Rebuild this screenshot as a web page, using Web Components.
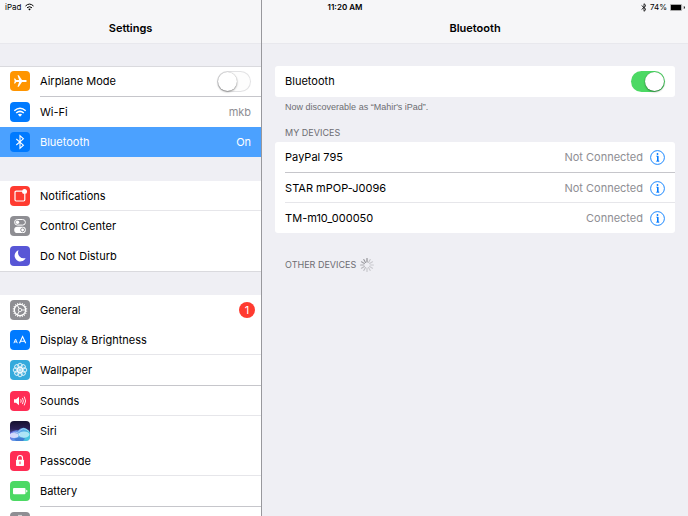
<!DOCTYPE html>
<html lang="en">
<head>
<meta charset="utf-8">
<title>Settings</title>
<style>
  html, body { height: 100%; margin: 0; }
  body {
    font: 11px/14px Inter, "Liberation Sans", sans-serif;
    color: #000; background: #efeff4;
    --sep-strong: #c6c6cb; --sep-soft: #e6e6ea; --muted: #8e8e93; --caption: #6d6d72; --blue: #007aff;
  }
</style>
</head>
<body>
<settings-app>
  <status-bar slot="status"></status-bar>
  <settings-pane slot="side" heading="Settings">
    <row-group edge="top">
      <settings-row icon="airplane" label="Airplane Mode" toggle="off" sep="strong"></settings-row>
      <settings-row icon="wifi" label="Wi-Fi" value="mkb"></settings-row>
      <settings-row icon="bluetooth" label="Bluetooth" value="On" selected></settings-row>
    </row-group>
    <row-group edge="bottom">
      <settings-row icon="notifications" label="Notifications" sep="soft"></settings-row>
      <settings-row icon="control" label="Control Center"></settings-row>
      <settings-row icon="moon" label="Do Not Disturb"></settings-row>
    </row-group>
    <row-group>
      <settings-row icon="gear" label="General" badge="1"></settings-row>
      <settings-row icon="display" label="Display &amp; Brightness" sep="soft"></settings-row>
      <settings-row icon="wallpaper" label="Wallpaper" sep="strong"></settings-row>
      <settings-row icon="sounds" label="Sounds" sep="soft"></settings-row>
      <settings-row icon="siri" label="Siri"></settings-row>
      <settings-row icon="passcode" label="Passcode" sep="soft"></settings-row>
      <settings-row icon="battery" label="Battery" sep="strong"></settings-row>
      <settings-row icon="privacy" aria-label="Privacy"></settings-row>
    </row-group>
  </settings-pane>
  <settings-pane slot="main" heading="Bluetooth">
    <card-group>
      <settings-row label="Bluetooth" toggle="on"></settings-row>
      <span slot="footer">Now discoverable as “Mahir's iPad”.</span>
    </card-group>
    <card-group heading="MY DEVICES">
      <device-row name="PayPal 795" status="Not Connected" sep="strong"></device-row>
      <device-row name="STAR mPOP-J0096" status="Not Connected" sep="soft"></device-row>
      <device-row name="TM-m10_000050" status="Connected"></device-row>
    </card-group>
    <search-heading>OTHER DEVICES</search-heading>
  </settings-pane>
</settings-app>

<script>
const BT = 'M6.3 7 13.4 13.2 10 16.3V3.7L13.4 6.8 6.3 13';
const ring = (n, draw) => Array.from({ length: n }, (_, i) => draw(i * 360 / n, i)).join('');
const ICONS = {
  airplane: ['#ff9500', '<path fill="#fff" d="M16.8 10c0 .6-.8 1-1.8 1h-3l-3.2 4.7H7.5L9.1 11H6.3l-1.2 1.6H4L4.7 10 4 7.4h1.1L6.3 9h2.8L7.5 4.3h1.3L12 9h3c1 0 1.8.4 1.8 1z"/>'],
  wifi: ['#007aff', '<g fill="none" stroke="#fff" stroke-width="1.5"><path d="M4.300 8.700Q10 3.700 15.700 8.700M6.200 11Q10 7.800 13.800 11"/></g><path fill="#fff" d="M7.900 12.600Q10 10.900 12.100 12.600L10 14.800z"/>'],
  bluetooth: ['#007aff', `<path fill="none" stroke="#fff" stroke-width="1.1" d="${BT}"/>`],
  notifications: ['#ff3b30', '<path fill="none" stroke="#fff" stroke-width="1.2" d="M12 5.200H6.200Q5 5.200 5 6.400v7.400Q5 15 6.200 15h7.400q1.200 0 1.200-1.200V8"/><circle cx="14.500" cy="5.400" r="2.500" fill="#fff"/>'],
  control: ['#8e8e93', '<rect x="4.600" y="3.500" width="10.800" height="5.600" rx="2.800" fill="none" stroke="#fff"/><circle cx="7.500" cy="6.300" r="1.700" fill="#fff"/><rect x="4.200" y="10.800" width="11.600" height="6.200" rx="3.100" fill="#fff"/><circle cx="12.600" cy="13.900" r="1.900" fill="#fff" stroke="#8e8e93"/>'],
  moon: ['#5856d6', '<path fill="#fff" d="M8.600 4.300a5.700 5.700 0 1 0 7 7.600A5.600 5.600 0 0 1 8.600 4.300z"/>'],
  gear: ['#8e8e93', '<g fill="none" stroke="#fff"><circle cx="10" cy="10" r="5.600" stroke-width="1.2"/>' + ring(18, a => `<path d="M10 4.500V2.700" transform="rotate(${a} 10 10)"/>`) + '<circle cx="10" cy="10" r="1.700" stroke-width=".8"/>' + ring(3, a => `<path stroke-width=".9" d="M11.700 10H15.500" transform="rotate(${a} 10 10)"/>`) + '</g>'],
  display: ['#007aff', '<g fill="none" stroke="#fff"><path stroke-width=".9" d="M3.900 13.200 5.600 9.100l1.700 4.100M4.500 11.900h2.200"/><path stroke-width="1.1" d="M9.500 13.300 12.600 6.600l3.100 6.700M10.500 11.200h4.200"/></g>'],
  wallpaper: ['#34aadc', '<g fill="#fff" fill-opacity=".1" stroke="#fff" stroke-width=".8">' + ring(8, a => `<ellipse cx="10" cy="5.700" rx="2.200" ry="2.500" transform="rotate(${a} 10 10)"/>`) + '<circle cx="10" cy="10" r="3"/></g><circle cx="10" cy="10" r="1" fill="#fff"/>'],
  sounds: ['#ff2d55', '<path fill="#fff" d="M4 8.200h2L9 5.700v8.600l-3-2.500H4z"/><g fill="none" stroke="#fff" stroke-width=".9"><path d="M10.700 8.300q1 1.700 0 3.400M12.400 6.900q1.900 3.100 0 6.200M14.200 5.600q2.800 4.400 0 8.800"/></g>'],
  siri: ['linear-gradient(#15112f,#2a2056 40%,#6a7fd6 75%,#eef4ff)', '<defs><linearGradient id="g" x2="1" y2=".3"><stop stop-color="#6b55dc"/><stop offset=".5" stop-color="#5fa0ea"/><stop offset="1" stop-color="#48c4de"/></linearGradient></defs><path fill="url(#g)" d="M0 12Q4 8.500 8 9.500 12 5.500 16 7.500q3 1.500 4 4v9H0z"/><ellipse cx="4" cy="14.600" rx="4.600" ry="2.500" fill="#e6e8ff" fill-opacity=".85"/><ellipse cx="14" cy="13.600" rx="5.400" ry="3.200" fill="#c4f0fa" fill-opacity=".8"/><path fill="none" stroke="#e7fbff" stroke-opacity=".7" stroke-width=".7" d="M8 11.500q5-7 11-1M1 13q5-4 9 1"/><path fill="#3f74d0" fill-opacity=".85" d="M4 18q5-2.500 11-.5l-2 2.500H6z"/>'],
  passcode: ['#ff2d55', '<path fill="none" stroke="#fff" stroke-width="1.2" d="M7.500 9V7a2.500 2.500 0 0 1 5 0v2"/><rect x="6" y="8.700" width="8" height="6.300" rx=".8" fill="#fff"/><path stroke="#ff2d55" d="M10 10.500v2.700"/>'],
  battery: ['#4cd964', '<rect x="3" y="7" width="12.500" height="6.200" rx="1" fill="#fff"/><path fill="#fff" d="M16.200 8.800q1.300.2 1.300 1.300t-1.300 1.300z"/>'],
  privacy: ['#8e8e93', '<g stroke="#fff" stroke-width="1.3" stroke-linecap="round"><path d="M7 11V5M9 10V3.500M11 10V3.500M13 11V5"/></g><path fill="#fff" d="M6.300 9.500h7.400v4q-1 3-3.700 3t-5-5q1-.8 1.300.5z"/>']
};

function define(name, render) {
  customElements.define(name, class extends HTMLElement {
    constructor() { super(); this.attachShadow({ mode: 'open' }); }
    connectedCallback() { this.shadowRoot.innerHTML = render(this); }
  });
}
const esc = s => (s || '').replace(/&/g, '&amp;');

define('settings-app', () => `
<style>
  :host { display: grid; grid-template: 100vh / 8fr 13fr; overflow: hidden; }
  slot[name=status] { display: block; grid-area: 1 / 1 / 2 / 3; align-self: start; z-index: 1; }
  slot[name=side], slot[name=main] { display: block; min-width: 0; min-height: 0; box-sizing: border-box; }
  slot[name=side] { grid-area: 1 / 1; border-right: 1px solid #98989d; }
  slot[name=main] { grid-area: 1 / 2; }
</style>
<slot name="side"></slot><slot name="main"></slot><slot name="status"></slot>`);

define('status-bar', () => `
<style>
  :host { display: grid; grid-template-columns: 1fr auto 1fr; align-items: center; height: 14px; padding: 0 3px 0 5px; font-size: 8px; line-height: 14px; }
  .l, .r { display: flex; align-items: center; gap: 4px; }
  .r { justify-content: flex-end; gap: 3px; }
  b { font-weight: 600; }
  svg { display: block; }
</style>
<span class="l">iPad
  <svg width="9" height="8" viewBox="0 0 9 8"><g fill="none" stroke="#000" stroke-width="1"><path d="M.5 3Q4.500-.8 8.500 3M2 4.800Q4.500 2.600 7 4.800"/></g><path d="M3.200 6Q4.500 5 5.800 6L4.500 7.500z"/></svg>
</span>
<b>11:20 AM</b>
<span class="r">
  <svg width="6" height="9" viewBox="0 0 6 9"><path fill="none" stroke="#000" stroke-width=".8" d="M.6 2.500 5 6.400 3 8.300V.7L5 2.600.6 6.500"/></svg>
  74%
  <svg width="15" height="7" viewBox="0 0 15 7"><rect x=".3" y=".4" width="11.400" height="6.200" rx="1" fill="none" stroke="#000" stroke-opacity=".6" stroke-width=".6"/><rect x="1" y="1" width="10" height="5" fill="#000"/><path d="M13.800 2q1 .3 1 1.500t-1 1.500z" fill="#000"/></svg>
</span>`);

define('settings-pane', el => `
<style>
  :host { display: flex; flex-direction: column; height: 100%; background: #efeff4; }
  header { flex: none; padding: 21px 0 8px; background: #f6f6f8; border-bottom: 1px solid #e8e8ed; text-align: center; }
  h1 { margin: 0; font-size: 11px; line-height: 14px; font-weight: 600; }
  main { flex: 1; min-height: 0; overflow: auto; scrollbar-width: none; padding-top: 22px; }
</style>
<header><h1>${el.getAttribute('heading')}</h1></header><main><slot></slot></main>`);

define('row-group', el => `
<style>
  :host { display: block; margin-bottom: 24px; background: #fff; }
  :host([edge=top]) { box-shadow: inset 0 1px #dadade; }
  :host([edge=bottom]) { box-shadow: 0 1px #dadade; }
</style><slot></slot>`);

define('settings-row', el => {
  const icon = ICONS[el.getAttribute('icon')];
  const toggle = el.getAttribute('toggle');
  const tag = toggle ? 'label' : 'a';
  const end = toggle ? `<input type="checkbox" role="switch" ${toggle === 'on' ? 'checked' : ''}>`
    : el.hasAttribute('badge') ? `<span class="badge">${el.getAttribute('badge')}</span>`
    : el.hasAttribute('value') ? `<span class="value">${el.getAttribute('value')}</span>` : '';
  return `
<style>
  :host { display: block; }
  .row { display: flex; align-items: flex-start; padding-left: 10px; gap: 10px; color: inherit; text-decoration: none; }
  .icon { flex: none; width: 20px; height: 20px; margin: 5px 0; border-radius: 4px; overflow: hidden; background: ${icon ? icon[0] : 'none'}; }
  .icon svg { display: block; }
  .body { flex: 1; min-width: 0; display: flex; align-items: center; justify-content: space-between; height: 30px; padding-right: 10px; }
  :host([toggle]) .body { border-bottom: 1px solid transparent; }
  :host([sep=strong]) .body { border-bottom: 1px solid var(--sep-strong); }
  :host([sep=soft]) .body { box-shadow: inset 0 -1px var(--sep-soft); }
  .value { color: var(--muted); }
  :host([selected]) .row { background: #4ba1ff; color: #fff; }
  :host([selected]) .value { color: #fff; }
  .badge { min-width: 16px; height: 16px; margin-right: -4px; border-radius: 8px; background: #ff3b30; color: #fff; text-align: center; line-height: 16px; }
  input { appearance: none; flex: none; display: flex; width: 34px; height: 21px; margin: 0; padding: 1px; box-sizing: border-box; border-radius: 11px; background: #fdfdfd; box-shadow: inset 0 0 0 1px #e2e2e4; }
  input::before { content: ""; width: 19px; height: 19px; border-radius: 50%; background: #fff; box-shadow: 0 1px 2px rgba(0,0,0,.4), 0 0 1px rgba(0,0,0,.3); }
  input:checked { background: #4cd964; box-shadow: none; justify-content: flex-end; }
</style>
<${tag} class="row" ${toggle ? '' : `href="#" ${el.hasAttribute('aria-label') ? `aria-label="${el.getAttribute('aria-label')}"` : ''}`}>
  ${icon ? `<span class="icon"><svg width="20" height="20" viewBox="0 0 20 20" aria-hidden="true">${icon[1]}</svg></span>` : ''}
  <span class="body"><span>${esc(el.getAttribute('label'))}</span>${end}</span>
</${tag}>`;
});

define('card-group', el => `
<style>
  :host { display: block; padding: 0 13px; }
  h2, footer { margin: 0; padding: 0 10px; color: var(--caption); font-size: 9px; line-height: 12px; font-weight: 400; }
  h2 { padding-top: 14px; padding-bottom: 3px; }
  footer { padding-top: 4px; font-family: "Liberation Sans", sans-serif; }
  .card { border-radius: 3px; background: #fff; }
</style>
${el.hasAttribute('heading') ? `<h2>${el.getAttribute('heading')}</h2>` : ''}
<div class="card"><slot></slot></div>
${el.querySelector('[slot=footer]') ? '<footer><slot name="footer"></slot></footer>' : ''}`);

define('device-row', el => `
<style>
  :host { display: block; padding-left: 10px; }
  .row { display: flex; align-items: center; height: 30px; padding-right: 10px; }
  :host([sep=strong]) .row { border-bottom: 1px solid var(--sep-strong); }
  :host([sep=soft]) .row { box-shadow: inset 0 -1px var(--sep-soft); }
  .name { flex: 1; }
  .status { color: var(--muted); }
  button { display: block; margin: 0 0 0 7px; padding: 0; border: 0; background: none; }
  svg { display: block; }
</style>
<div class="row"><span class="name">${el.getAttribute('name')}</span><span class="status">${el.getAttribute('status')}</span>
<button type="button" aria-label="Info about ${el.getAttribute('name')}"><svg width="15" height="15" viewBox="0 0 15 15"><circle cx="7.500" cy="7.500" r="6.900" fill="none" stroke="#007aff" stroke-width=".9"/><circle cx="7.500" cy="4" r=".9" fill="#007aff"/><path d="M6.200 6.200h2v5h1M6 11.200h3.200" fill="none" stroke="#007aff" stroke-width=".7"/><path d="M7.600 6v5.300" stroke="#007aff" stroke-width="1.2"/></svg></button></div>`);

define('search-heading', () => `
<style>
  :host { display: flex; align-items: center; gap: 4px; padding: 25px 23px 0; color: var(--caption); font-size: 9px; line-height: 14px; }
  svg { display: block; }
</style>
<slot></slot>
<svg width="14" height="14" viewBox="0 0 14 14" aria-hidden="true">${ring(12, (a, i) => `<path d="M7 .6V4" stroke="#77777c" stroke-width="1.1" stroke-linecap="round" opacity="${[.85, .35, .3, .3, .3, .3, .35, .4, .45, .55, .65, .75][i]}" transform="rotate(${a} 7 7)"/>`)}</svg>`);
</script>
</body>
</html>
